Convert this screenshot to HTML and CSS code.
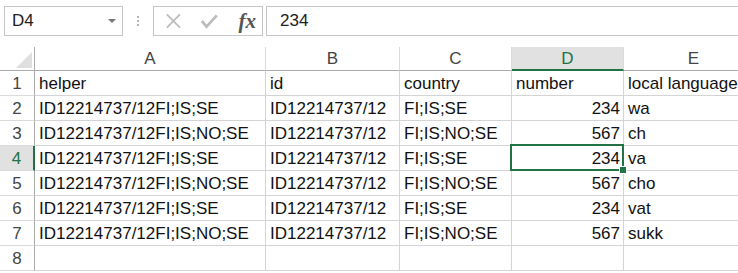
FILE: index.html
```html
<!DOCTYPE html>
<html lang="en">
<head>
    <meta charset="UTF-8">
    <meta name="viewport" content="width=device-width, initial-scale=1.0">
    <link rel="stylesheet" href="styles.css">
    <title>Sheet</title>
</head>
<body>
    <div class="formula-bar">
        <div class="name-box">
            <span>D4</span>
            <span class="name-box__arrow"></span>
        </div>
        <div class="grip"><i></i><i></i><i></i></div>
        <div class="fx-buttons">
            <svg class="fx-buttons__icon" width="18" height="18" viewBox="0 0 18 18"><path d="M2 2 L16 16 M16 2 L2 16" stroke="#bdbdbd" stroke-width="2" fill="none"/></svg>
            <svg class="fx-buttons__icon" width="20" height="18" viewBox="0 0 20 18"><path d="M2 9 L7 15 L18 3" stroke="#bdbdbd" stroke-width="3" fill="none"/></svg>
            <span class="fx-buttons__fx">fx</span>
        </div>
        <div class="formula-input">234</div>
    </div>

    <div class="sheet">
        <div class="corner"><svg width="35" height="24" viewBox="0 0 35 24"><polygon points="16,21 32,5 32,21" fill="#dfdfdf"/></svg></div>
        <div class="col-head">A</div>
        <div class="col-head">B</div>
        <div class="col-head">C</div>
        <div class="col-head col-head--active">D</div>
        <div class="col-head">E</div>

        <div class="row-head">1</div>
        <div class="cell">helper</div>
        <div class="cell">id</div>
        <div class="cell">country</div>
        <div class="cell">number</div>
        <div class="cell">local language</div>

        <div class="row-head">2</div>
        <div class="cell">ID12214737/12FI;IS;SE</div>
        <div class="cell">ID12214737/12</div>
        <div class="cell">FI;IS;SE</div>
        <div class="cell cell--num">234</div>
        <div class="cell">wa</div>

        <div class="row-head">3</div>
        <div class="cell">ID12214737/12FI;IS;NO;SE</div>
        <div class="cell">ID12214737/12</div>
        <div class="cell">FI;IS;NO;SE</div>
        <div class="cell cell--num">567</div>
        <div class="cell">ch</div>

        <div class="row-head row-head--active">4</div>
        <div class="cell">ID12214737/12FI;IS;SE</div>
        <div class="cell">ID12214737/12</div>
        <div class="cell">FI;IS;SE</div>
        <div class="cell cell--num cell--selected">234</div>
        <div class="cell">va</div>

        <div class="row-head">5</div>
        <div class="cell">ID12214737/12FI;IS;NO;SE</div>
        <div class="cell">ID12214737/12</div>
        <div class="cell">FI;IS;NO;SE</div>
        <div class="cell cell--num">567</div>
        <div class="cell">cho</div>

        <div class="row-head">6</div>
        <div class="cell">ID12214737/12FI;IS;SE</div>
        <div class="cell">ID12214737/12</div>
        <div class="cell">FI;IS;SE</div>
        <div class="cell cell--num">234</div>
        <div class="cell">vat</div>

        <div class="row-head">7</div>
        <div class="cell">ID12214737/12FI;IS;NO;SE</div>
        <div class="cell">ID12214737/12</div>
        <div class="cell">FI;IS;NO;SE</div>
        <div class="cell cell--num">567</div>
        <div class="cell">sukk</div>

        <div class="row-head">8</div>
        <div class="cell"></div>
        <div class="cell"></div>
        <div class="cell"></div>
        <div class="cell"></div>
        <div class="cell"></div>
    </div>
</body>
</html>
```

FILE: styles.css
```css
*{box-sizing: border-box;}
body{margin: 0; background: #fff; font-family: "Liberation Sans", Arial, sans-serif; font-size: 17px; color: #111; overflow: hidden;}

/* formula bar */
.formula-bar{display: flex; align-items: stretch; height: 47px; padding: 6px 0 11px 4px;}
.name-box{width: 119px; border: 1px solid #c6c6c6; display: flex; align-items: center; justify-content: space-between; padding: 0 6px 0 7px; color: #222;}
.name-box__arrow{width: 0; height: 0; border-left: 4px solid transparent; border-right: 4px solid transparent; border-top: 4px solid #777;}
.grip{width: 30px; display: flex; flex-direction: column; align-items: center; justify-content: center; gap: 2px;}
.grip i{width: 2px; height: 2px; background: #b5b5b5;}
.fx-buttons{width: 110px; border: 1px solid #c6c6c6; display: flex; align-items: center; padding: 0 6px 0 11px; gap: 18px;}
.fx-buttons__fx{font-family: "Liberation Serif", "Times New Roman", serif; font-style: italic; font-weight: bold; font-size: 21px; color: #555; margin-left: 2px;}
.formula-input{flex: 1; margin-left: 3px; border: 1px solid #c6c6c6; border-right: 0; display: flex; align-items: center; padding-left: 13px; color: #222;}

/* sheet */
.sheet{display: grid; grid-template-columns: 35px 231px 134px 112px 112px 140px; grid-template-rows: 24px; grid-auto-rows: 25px;}
.corner{border-right: 1px solid #ababab; border-bottom: 1px solid #ababab;}
.corner svg{display: block;}
.col-head{display: flex; align-items: center; justify-content: center; color: #444; border-right: 1px solid #dadada; border-bottom: 1px solid #ababab; padding-top: 1px;}
.col-head--active{background: #e1e1e1; color: #217346; border-bottom: 2px solid #217346;}
.row-head{display: flex; align-items: center; justify-content: center; color: #444; border-right: 1px solid #ababab; border-bottom: 1px solid #dadada; padding-top: 2px;}
.row-head--active{background: #e1e1e1; color: #217346; border-right: 2px solid #217346;}
.cell{display: flex; align-items: center; padding: 2px 0 0 4px; border-right: 1px solid #d4d4d4; border-bottom: 1px solid #d4d4d4; white-space: nowrap; overflow: hidden; color: #111;}
.cell--num{justify-content: flex-end; padding: 2px 3px 0 0;}
.cell--selected{position: relative; overflow: visible;}
.cell--selected::after{content: ""; position: absolute; left: -2px; top: -2px; right: -1px; bottom: -1px; border: 2px solid #217346;}
.cell--selected::before{content: ""; position: absolute; right: -4px; bottom: -4px; width: 6px; height: 6px; background: #217346; border: 1px solid #fff; z-index: 1;}
```
